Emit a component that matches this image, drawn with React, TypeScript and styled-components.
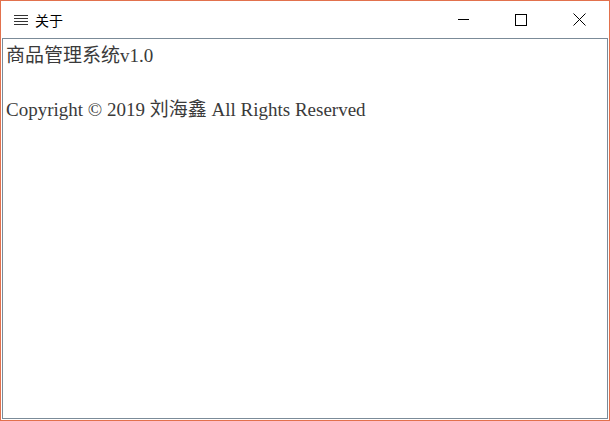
import React from "react";
import styled, { createGlobalStyle } from "styled-components";

const Global = createGlobalStyle`
  html, body { margin: 0; padding: 0; background: #ffffff; }
  #root { width: 610px; height: 421px; }
`;

const Window = styled.div`
  box-sizing: border-box;
  width: 610px;
  height: 421px;
  border: 1px solid #e2714d;
  background: #ffffff;
  display: flex;
  flex-direction: column;
  padding: 0 1px 1px 1px;
`;

const TitleBar = styled.div`
  height: 37px;
  flex: none;
  display: flex;
  align-items: center;
  background: #ffffff;
`;

const MenuIcon = styled.svg`
  width: 14px;
  height: 10px;
  margin-left: 12px;
  margin-right: 7px;
`;

const Title = styled.span`
  font-family: "Noto Sans CJK SC", "Noto Sans", sans-serif;
  font-size: 14px;
  color: #000000;
  flex: 1;
  line-height: 1;
`;

const CaptionButton = styled.div`
  width: 58px;
  height: 37px;
  display: flex;
  align-items: center;
  justify-content: center;
  svg { display: block; }
`;

const Content = styled.div`
  flex: 1;
  border: 1px solid #7b8b98;
  padding: 3px 3px;
  font-family: "Liberation Serif", "Noto Sans CJK SC", serif;
  font-size: 19px;
  color: #3a3a3a;
`;

const Line = styled.p`
  margin: 0;
  line-height: 28px;
  white-space: nowrap;
`;

const Blank = styled.div`
  height: 26px;
`;

export default function App() {
  return (
    <>
      <Global />
      <Window>
        <TitleBar>
          <MenuIcon viewBox="0 0 14 10">
            <g stroke="#333" strokeWidth="1">
              <line x1="0" y1="0.5" x2="14" y2="0.5" />
              <line x1="0" y1="3.5" x2="14" y2="3.5" />
              <line x1="0" y1="6.5" x2="14" y2="6.5" />
              <line x1="0" y1="9.5" x2="14" y2="9.5" />
            </g>
          </MenuIcon>
          <Title>关于</Title>
          <CaptionButton>
            <svg width="11" height="1" viewBox="0 0 11 1">
              <line x1="0" y1="0.5" x2="11" y2="0.5" stroke="#000" strokeWidth="1" />
            </svg>
          </CaptionButton>
          <CaptionButton>
            <svg width="12" height="12" viewBox="0 0 12 12">
              <rect x="0.5" y="0.5" width="11" height="11" fill="none" stroke="#000" strokeWidth="1" />
            </svg>
          </CaptionButton>
          <CaptionButton>
            <svg width="13" height="13" viewBox="0 0 13 13">
              <path d="M0.5 0.5 L12.5 12.5 M12.5 0.5 L0.5 12.5" stroke="#000" strokeWidth="1" fill="none" />
            </svg>
          </CaptionButton>
        </TitleBar>
        <Content>
          <Line>商品管理系统v1.0</Line>
          <Blank />
          <Line>Copyright © 2019 刘海鑫 All Rights Reserved</Line>
        </Content>
      </Window>
    </>
  );
}
